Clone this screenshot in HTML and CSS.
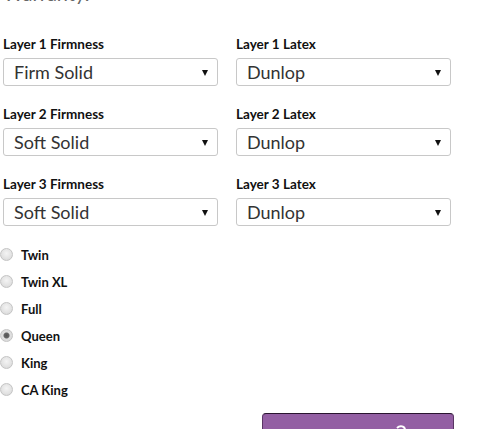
FILE: index.html
```html
<!DOCTYPE html>
<html>
<head>
<meta charset="utf-8">
<link rel="stylesheet" href="styles.css">
</head>
<body>
<div class="page">
  <p class="intro">Warranty.</p>
  <div class="grid">
    <div class="field">
      <label class="label">Layer 1 Firmness</label>
      <div class="select-wrap"><select class="select"><option>Firm Solid</option></select></div>
    </div>
    <div class="field">
      <label class="label">Layer 1 Latex</label>
      <div class="select-wrap"><select class="select"><option>Dunlop</option></select></div>
    </div>
    <div class="field">
      <label class="label">Layer 2 Firmness</label>
      <div class="select-wrap"><select class="select"><option>Soft Solid</option></select></div>
    </div>
    <div class="field">
      <label class="label">Layer 2 Latex</label>
      <div class="select-wrap"><select class="select"><option>Dunlop</option></select></div>
    </div>
    <div class="field">
      <label class="label">Layer 3 Firmness</label>
      <div class="select-wrap"><select class="select"><option>Soft Solid</option></select></div>
    </div>
    <div class="field">
      <label class="label">Layer 3 Latex</label>
      <div class="select-wrap"><select class="select"><option>Dunlop</option></select></div>
    </div>
  </div>
  <div class="sizes">
    <label class="size"><input type="radio" name="size" class="radio"><span>Twin</span></label>
    <label class="size"><input type="radio" name="size" class="radio"><span>Twin XL</span></label>
    <label class="size"><input type="radio" name="size" class="radio"><span>Full</span></label>
    <label class="size"><input type="radio" name="size" class="radio" checked><span>Queen</span></label>
    <label class="size"><input type="radio" name="size" class="radio"><span>King</span></label>
    <label class="size"><input type="radio" name="size" class="radio"><span>CA King</span></label>
  </div>
  <div class="actions">
    <button class="button" type="button">
      <svg class="btn-icon" width="40" height="16" viewBox="0 0 40 16"><path d="M2 8 C5 5 10 6 10 10" fill="none" stroke="#fff" stroke-width="2"/><circle cx="36" cy="15" r="1.5" fill="#fff"/></svg>
    </button>
  </div>
</div>
</body>
</html>
```
FILE: styles.css
```css
html, body {
  margin: 0;
  padding: 0;
  background: #fff;
  overflow: hidden;
}
body {
  font-family: "Lato", "DejaVu Sans", sans-serif;
  color: #111;
}
.page {
  padding-left: 3px;
  width: 449px;
}
.intro {
  margin: -19px 0 0 0;
  font-size: 20px;
  line-height: 24px;
  color: #666;
  height: 24px;
}
.grid {
  margin-top: 31px;
  display: grid;
  grid-template-columns: 215px 215px;
  column-gap: 18px;
  row-gap: 20px;
}
.field {
  display: flex;
  flex-direction: column;
}
.label {
  font-size: 13.5px;
  font-weight: 700;
  line-height: 16px;
  margin-bottom: 6px;
  color: #111;
}
.select-wrap {
  position: relative;
  width: 215px;
}
.select-wrap::after {
  content: "";
  position: absolute;
  right: 10px;
  top: 12px;
  border-left: 3px solid transparent;
  border-right: 3px solid transparent;
  border-top: 6px solid #111;
}
.select {
  -webkit-appearance: none;
  appearance: none;
  width: 215px;
  height: 28px;
  box-sizing: border-box;
  border: 1px solid #c8c8c8;
  border-radius: 3px;
  background: #fff;
  padding: 0 0 0 10px;
  font-family: "Lato", "DejaVu Sans", sans-serif;
  font-size: 18px;
  color: #333;
  margin: 0;
}
.sizes {
  margin-top: 15px;
  display: flex;
  flex-direction: column;
  margin-left: -3px;
}
.size {
  display: flex;
  align-items: center;
  height: 27px;
  font-size: 13px;
  font-weight: 700;
  color: #111;
}
.radio {
  -webkit-appearance: none;
  appearance: none;
  width: 13px;
  height: 13px;
  margin: 0 8px 0 0;
  border-radius: 50%;
  border: 1px solid #c4c4c4;
  box-sizing: border-box;
  background: radial-gradient(circle at 50% 40%, #f4f4f4 0, #e2e2e2 60%, #d4d4d4 100%);
}
.radio:checked {
  background: radial-gradient(circle, #555 0, #666 2.5px, #e0e0e0 3.5px, #d6d6d6 100%);
}
.actions {
  display: flex;
  justify-content: flex-end;
  margin-top: 10px;
}
.button {
  width: 192px;
  height: 40px;
  background: #935fa3;
  border: 1px solid #5a3564;
  border-top-color: #2a1530;
  border-radius: 4px;
  margin-right: -2px;
  padding: 6px 0 0 132px;
  display: flex;
  align-items: flex-start;
}
.btn-icon {
  display: block;
}
```
